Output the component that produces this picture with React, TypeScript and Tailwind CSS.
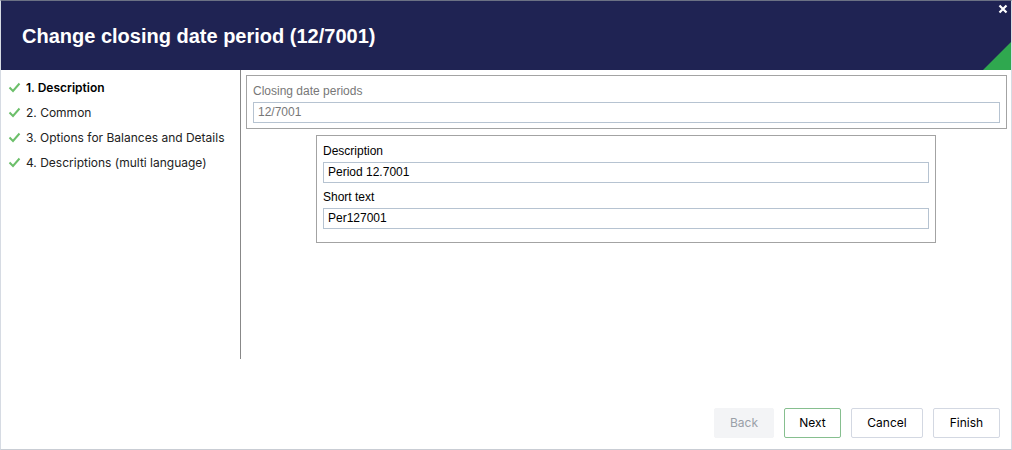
import React from 'react';

const STEPS = [
  { label: '1. Description', active: true },
  { label: '2. Common' },
  { label: '3. Options for Balances and Details' },
  { label: '4. Descriptions (multi language)' },
];

function Check() {
  return (
    <svg width="13" height="11" viewBox="0 0 13 11" className="shrink-0">
      <path d="M1.5 5.5 L5 9 L11.5 1.5" fill="none" stroke="#6cbf6a" strokeWidth="2" />
    </svg>
  );
}

function Field({ label, value, muted }: { label: string; value: string; muted?: boolean }) {
  return (
    <div className="flex flex-col">
      <div className={`text-[12px] h-[22px] flex items-center ${muted ? 'text-[#777]' : 'text-black'}`}>{label}</div>
      <div className={`h-[21px] border border-[#b6c3d1] bg-white px-[4px] text-[12px] leading-[19px] ${muted ? 'text-[#777]' : 'text-black'}`}>
        {value}
      </div>
    </div>
  );
}

function Btn({ children, variant, w }: { children: React.ReactNode; variant?: 'disabled' | 'primary'; w: string }) {
  const cls =
    variant === 'disabled'
      ? 'bg-[#f3f4f6] border-[#f3f4f6] text-[#9aa0a8]'
      : variant === 'primary'
        ? 'bg-white border-[#86bf8f] text-black'
        : 'bg-white border-[#d3d8e2] text-black';
  return (
    <div className={`h-[30px] ${w} flex items-center justify-center rounded-[2px] border text-[12px] ${cls}`}>
      {children}
    </div>
  );
}

export default function App() {
  return (
    <div
      className="w-[1012px] h-[450px] bg-white flex flex-col border-x border-b border-x-[#d6dbe3] border-b-[#c9cdd4] border-t border-t-[#6b7184]"
      style={{ fontFamily: 'Inter, "Liberation Sans", sans-serif' }}
    >
      {/* header */}
      <div className="relative h-[69px] bg-[#1f2353] flex items-center pl-[21px] overflow-hidden">
        <div className="text-white text-[20px] font-bold pt-[1px]" style={{ fontFamily: '"Liberation Sans", Arial, sans-serif' }}>
          Change closing date period (12/7001)
        </div>
        <svg width="10" height="10" viewBox="0 0 10 10" className="absolute right-[3px] top-[3px]">
          <path d="M1.5 1.5 L8.5 8.5 M8.5 1.5 L1.5 8.5" stroke="white" strokeWidth="2.2" />
        </svg>
        <svg width="28" height="28" viewBox="0 0 28 28" className="absolute right-0 bottom-0">
          <polygon points="28,0 28,28 0,28" fill="#2fa84f" />
        </svg>
      </div>

      <div className="flex-1 flex flex-col">
        <div className="flex h-[289px]">
          {/* steps */}
          <div className="w-[240px] border-r border-[#888] pt-[9px] pl-[7px] flex flex-col gap-[8px]">
            {STEPS.map((s) => (
              <div key={s.label} className="flex items-center gap-[5px] h-[17px]">
                <Check />
                <span className={`text-[12px] ${s.active ? 'font-semibold text-black' : 'text-[#222]'}`}>{s.label}</span>
              </div>
            ))}
          </div>

          {/* content */}
          <div className="flex-1 flex flex-col pt-[5px] pl-[5px] pr-[4px]" style={{ fontFamily: '"Liberation Sans", Arial, sans-serif' }}>
            <div className="border border-[#a3a3a3] px-[6px] pt-[4px] pb-[5px]">
              <Field label="Closing date periods" value="12/7001" muted />
            </div>
            <div className="mt-[6px] ml-[70px] w-[620px] border border-[#a3a3a3] px-[6px] pt-[4px] pb-[13px] flex flex-col gap-[3px]">
              <Field label="Description" value="Period 12.7001" />
              <Field label="Short text" value="Per127001" />
            </div>
          </div>
        </div>

        {/* footer */}
        <div className="flex-1 flex items-end justify-end gap-[10px] pr-[11px] pb-[11px]">
          <Btn variant="disabled" w="w-[60px]">Back</Btn>
          <Btn variant="primary" w="w-[57px]">Next</Btn>
          <Btn w="w-[72px]">Cancel</Btn>
          <Btn w="w-[67px]">Finish</Btn>
        </div>
      </div>
    </div>
  );
}
